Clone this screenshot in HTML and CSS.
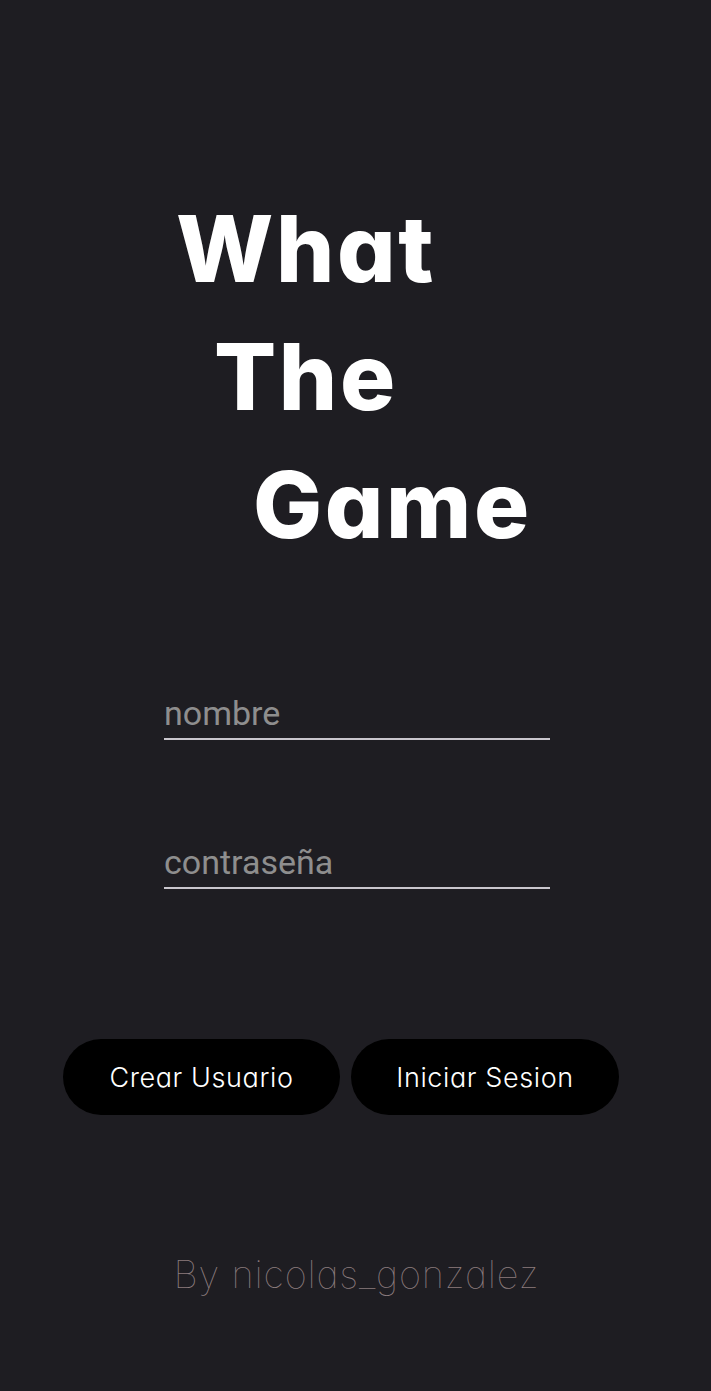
FILE: index.html
```html
<!DOCTYPE html>
<html lang="es">
<head>
<meta charset="utf-8">
<title>What The Game</title>
<link rel="stylesheet" href="styles.css">
</head>
<body>
<main class="page">
  <h1 class="title">
    <span class="line l1">What</span>
    <span class="line l2">The</span>
    <span class="line l3">Game</span>
  </h1>
  <form class="form">
    <input class="field" type="text" placeholder="nombre">
    <input class="field" type="password" placeholder="contraseña">
    <div class="actions">
      <button type="button" class="btn">Crear Usuario</button>
      <button type="button" class="btn btn-wide">Iniciar Sesion</button>
    </div>
  </form>
  <footer class="credit">By nicolas_gonzalez</footer>
</main>
</body>
</html>
```
FILE: styles.css
```css
html, body {
  margin: 0;
  padding: 0;
  background: #1e1d22;
}
.page {
  width: 711px;
  min-height: 1391px;
  display: flex;
  flex-direction: column;
  font-family: Inter, "Liberation Sans", sans-serif;
}
.title {
  margin: 0;
  padding-top: 185px;
  padding-left: 176px;
  display: flex;
  flex-direction: column;
  font-family: Inter, sans-serif;
  font-weight: 800;
  font-size: 92px;
  line-height: 128px;
  letter-spacing: 2.6px;
  color: #ffffff;
  font-feature-settings: "cv11" 1;
}
.line { display: block; }
.l2 { padding-left: 38px; }
.l3 { padding-left: 77px; }
.form {
  display: flex;
  flex-direction: column;
  padding-top: 121px;
}
.field {
  margin-left: 164px;
  width: 386px;
  height: 50px;
  box-sizing: border-box;
  padding: 0 0 2px 0;
  border: none;
  border-bottom: 2px solid #c9c6cd;
  background: transparent;
  font-family: Roboto, sans-serif;
  font-size: 34px;
  color: #8e8e8e;
  outline: none;
}
.field::placeholder { color: #8e8e8e; }
.field + .field { margin-top: 99px; }
.actions {
  display: flex;
  gap: 11px;
  margin-left: 63px;
  margin-top: 150px;
}
.btn {
  width: 277px;
  height: 76px;
  border: none;
  border-radius: 38px;
  background: #000000;
  color: #ffffff;
  font-family: Inter, sans-serif;
  font-weight: 300;
  font-size: 27px;
  letter-spacing: 0.6px;
  font-feature-settings: "cv11" 1;
}
.btn-wide { width: 268px; }
.credit {
  margin-top: 136px;
  text-align: center;
  font-family: Inter, sans-serif;
  font-weight: 100;
  font-size: 38px;
  letter-spacing: 0.8px;
  color: #8c7c7e;
  padding-left: 2px;
  font-feature-settings: "cv11" 1;
}
```
